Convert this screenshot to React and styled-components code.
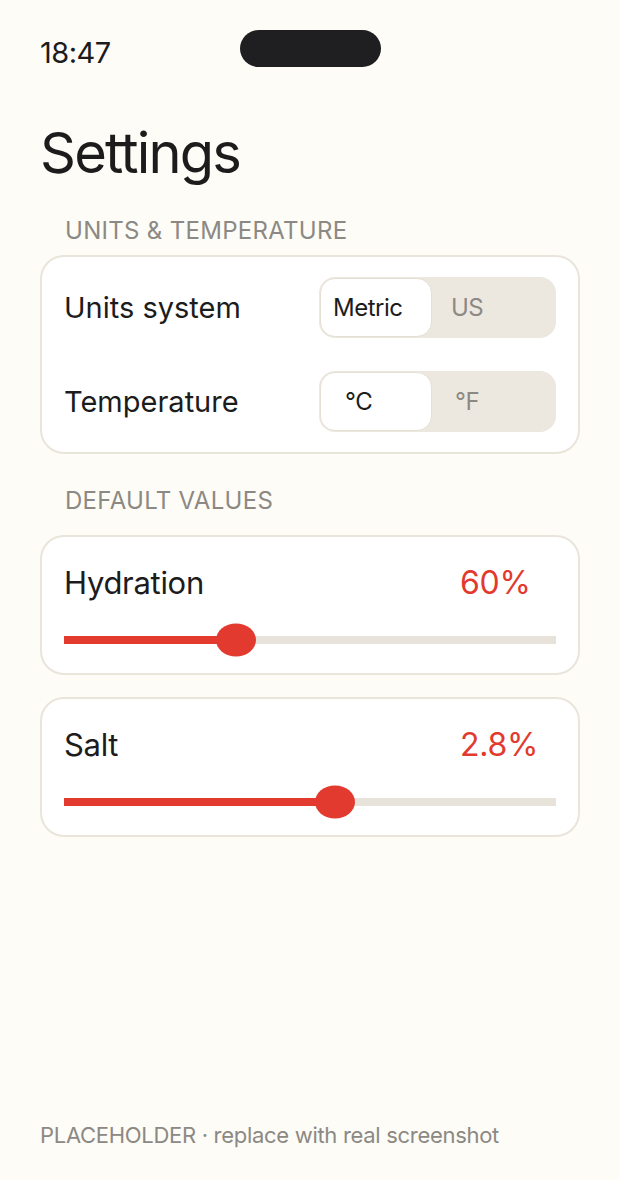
import React from 'react'
import styled, { createGlobalStyle } from 'styled-components'

const GlobalStyle = createGlobalStyle`
  html, body {
    margin: 0;
    padding: 0;
    background: #fdfcf7;
  }
  body {
    font-family: Inter, "Noto Sans", "Liberation Sans", sans-serif;
    color: #1c1c1c;
  }
`

const Screen = styled.div`
  width: 620px;
  height: 1180px;
  box-sizing: border-box;
  padding: 0 40px;
  display: flex;
  flex-direction: column;
  background: #fdfcf7;
`

const StatusBar = styled.div`
  display: grid;
  grid-template-columns: 1fr auto 1fr;
  grid-template-rows: 37px;
  align-items: start;
  padding-top: 30px;
`

const Clock = styled.div`
  font-size: 29px;
  line-height: 35px;
  letter-spacing: -0.5px;
  margin-top: 5px;
  color: #1c1c1c;
`

const Notch = styled.div`
  width: 141px;
  height: 37px;
  border-radius: 19px;
  background: #1f1f21;
`

const Title = styled.h1`
  margin: 58px 0 0;
  font-size: 56px;
  font-weight: 400;
  line-height: 1;
  letter-spacing: -1.8px;
  color: #1c1c1c;
`

const SectionLabel = styled.div`
  margin: ${({ top }) => top}px 0 ${({ bottom }) => bottom}px 25px;
  font-size: 24px;
  line-height: 1;
  color: #8c8984;
  letter-spacing: 0.3px;
`

const Card = styled.div`
  background: #fff;
  border: 2px solid #e9e5db;
  border-radius: 24px;
  padding: ${({ pad }) => pad || '20px 22px'};
  display: flex;
  flex-direction: column;
  gap: ${({ gap }) => gap || 0}px;
  & + & {
    margin-top: 22px;
  }
`

const Row = styled.div`
  display: flex;
  align-items: center;
  justify-content: space-between;
  height: 61px;
`

const RowLabel = styled.div`
  font-size: 29px;
`

const Segmented = styled.div`
  width: 237px;
  height: 61px;
  box-sizing: border-box;
  padding: 1px;
  border-radius: 16px;
  background: #ece8e0;
  display: flex;
`

const Option = styled.div`
  box-sizing: border-box;
  display: flex;
  align-items: center;
  padding-left: ${({ inset }) => inset}px;
  width: ${({ active }) => (active ? '112px' : 'auto')};
  flex: ${({ active }) => (active ? 'none' : '1')};
  font-size: 24px;
  letter-spacing: -0.5px;
  border-radius: 15px;
  color: ${({ active }) => (active ? '#1c1c1c' : '#8c8984')};
  background: ${({ active }) => (active ? '#fff' : 'transparent')};
  border: 1px solid ${({ active }) => (active ? '#e5e0d4' : 'transparent')};
`

const SliderHead = styled.div`
  display: flex;
  align-items: baseline;
  justify-content: space-between;
  height: 32px;
  line-height: 32px;
`

const SliderName = styled.div`
  font-size: 31px;
  letter-spacing: -0.3px;
`

const SliderValue = styled.div`
  width: 96px;
  font-size: 32px;
  color: #e23a2e;
  letter-spacing: -0.3px;
`

const Track = styled.div`
  position: relative;
  height: 8px;
  margin: 37px 0 29px;
  background: #e7e3da;
`

const Fill = styled.div`
  position: absolute;
  left: 0;
  top: 0;
  bottom: 0;
  background: #e23a2e;
`

const Thumb = styled.div`
  position: absolute;
  top: 50%;
  width: 40px;
  height: 33px;
  border-radius: 50%;
  background: #e23a2e;
  transform: translate(-50%, -50%);
`

const Footer = styled.div`
  margin-top: auto;
  margin-bottom: 32px;
  font-size: 22px;
  color: #8c8984;
  letter-spacing: -0.3px;
`

const Segment = ({ options, insets }) => (
  <Segmented>
    {options.map((o, i) => (
      <Option key={o} active={i === 0} inset={insets[i]}>
        {o}
      </Option>
    ))}
  </Segmented>
)

const Slider = ({ name, value, pct }) => (
  <Card pad="30px 22px 0">
    <SliderHead>
      <SliderName>{name}</SliderName>
      <SliderValue>{value}</SliderValue>
    </SliderHead>
    <Track>
      <Fill style={{ width: `${pct}%` }} />
      <Thumb style={{ left: `${pct}%` }} />
    </Track>
  </Card>
)

export default function App() {
  return (
    <Screen>
      <GlobalStyle />
      <StatusBar>
        <Clock>18:47</Clock>
        <Notch />
        <div />
      </StatusBar>
      <Title>Settings</Title>

      <SectionLabel top={38} bottom={12}>UNITS &amp; TEMPERATURE</SectionLabel>
      <Card gap={33}>
        <Row>
          <RowLabel>Units system</RowLabel>
          <Segment options={['Metric', 'US']} insets={[12, 18]} />
        </Row>
        <Row>
          <RowLabel>Temperature</RowLabel>
          <Segment options={['°C', '°F']} insets={[24, 22]} />
        </Row>
      </Card>

      <SectionLabel top={35} bottom={22}>DEFAULT VALUES</SectionLabel>
      <div>
        <Slider name="Hydration" value="60%" pct={35} />
        <Slider name="Salt" value="2.8%" pct={55} />
      </div>

      <Footer>PLACEHOLDER · replace with real screenshot</Footer>
    </Screen>
  )
}
